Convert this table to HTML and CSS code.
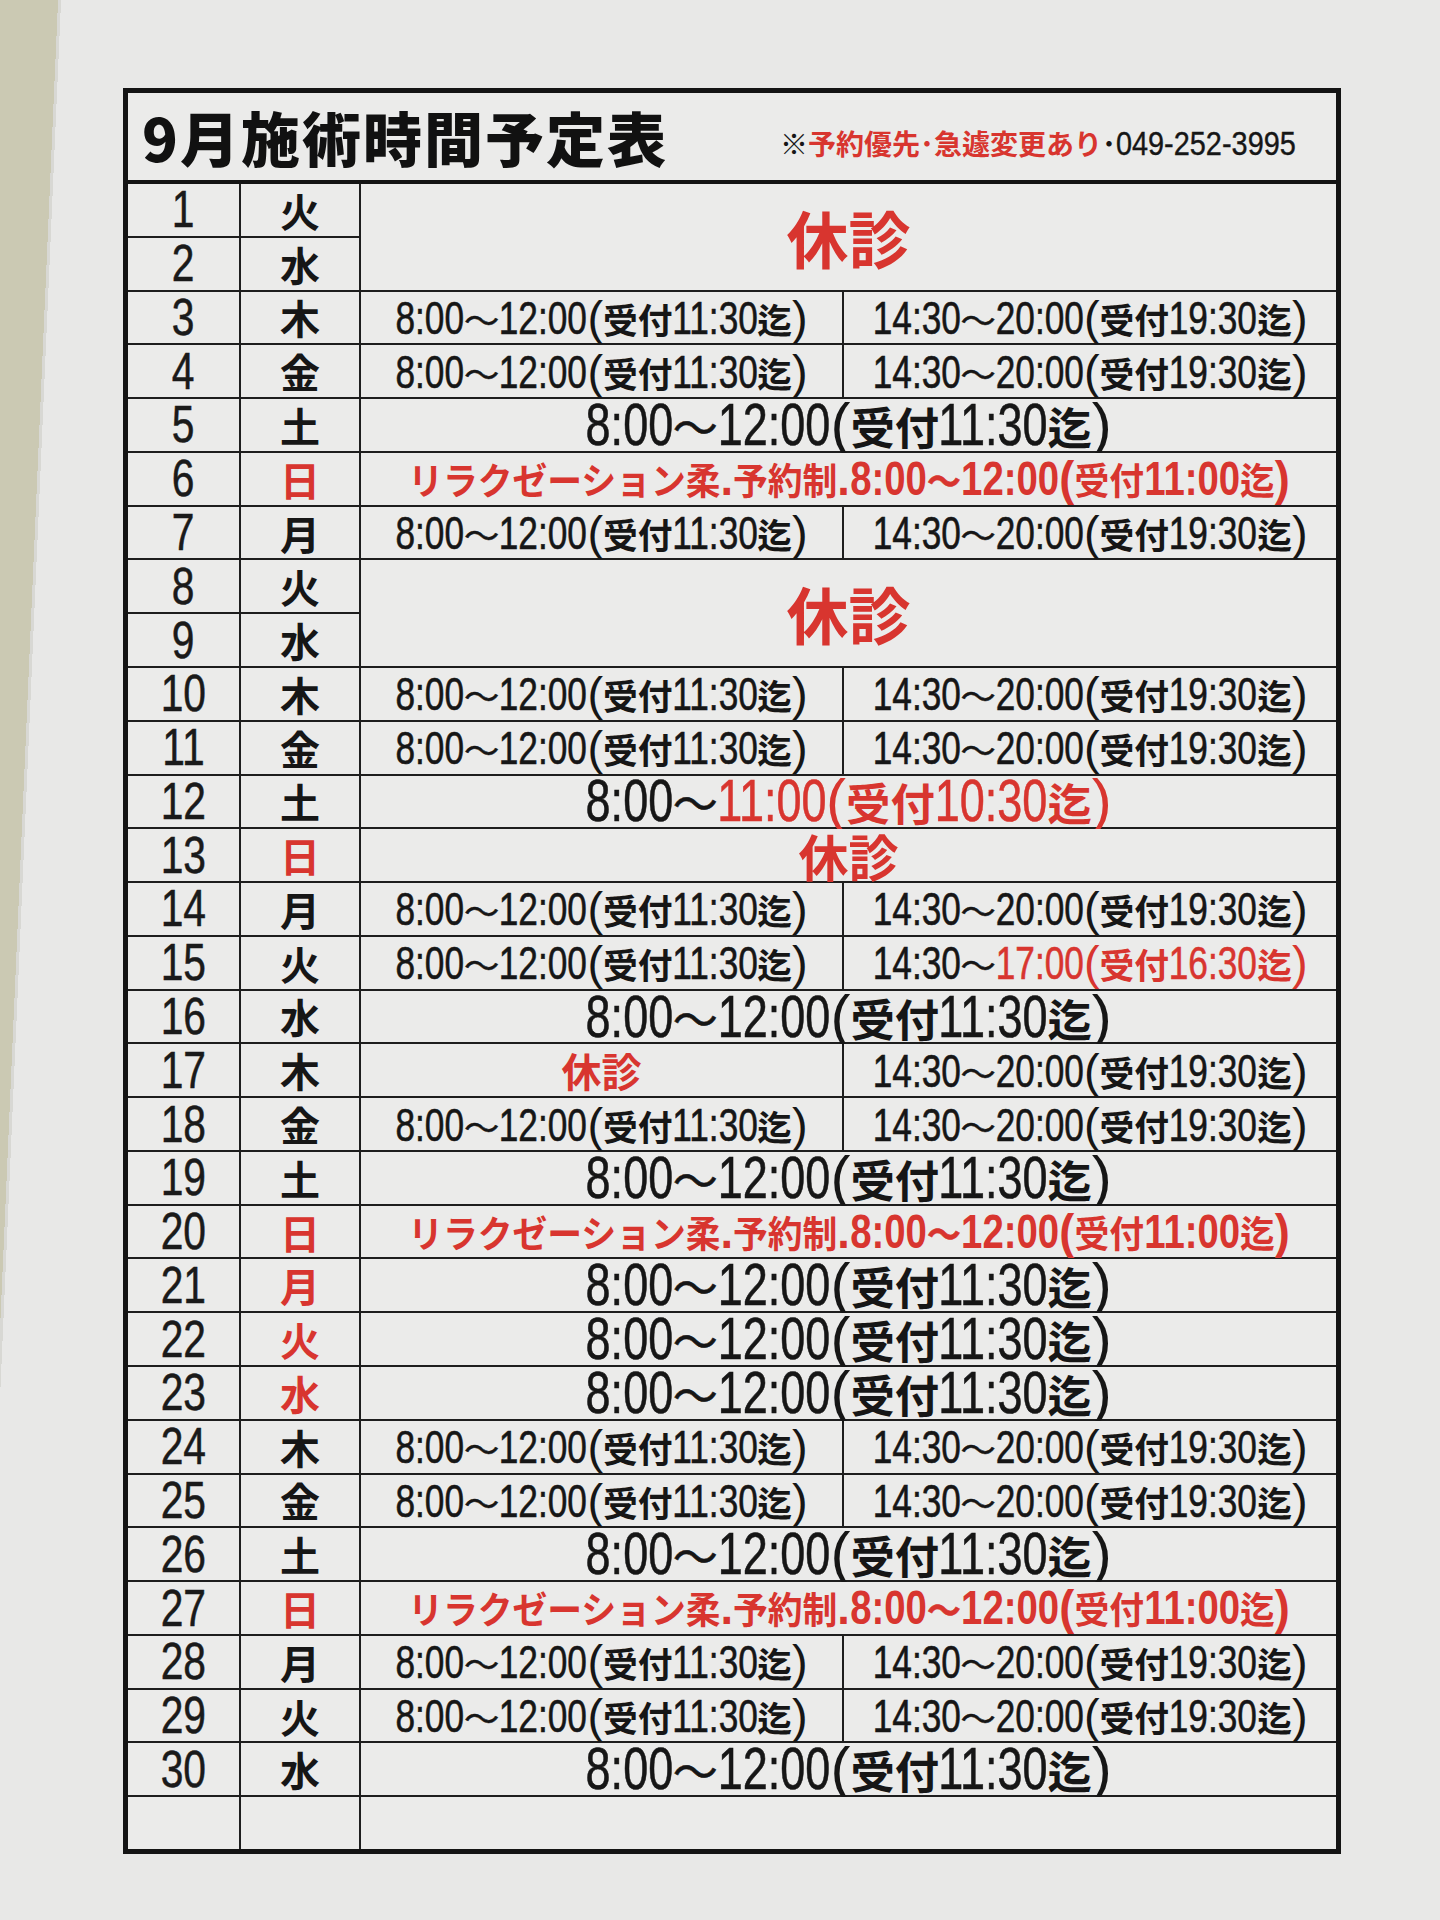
FILE: index.html
```html
<!DOCTYPE html>
<html lang="ja">
<head>
<meta charset="utf-8">
<title>9月施術時間予定表</title>
<link rel="stylesheet" href="styles.css">
</head>
<body>
<div class="sheet">
  <div class="head">
    <h1 class="title">9月施術時間予定表</h1>
    <p class="note"><span class="k">※</span><span class="red">予約優先･急遽変更あり</span><span class="k">･</span><i class="tel">049-252-3995</i></p>
  </div>
  <div class="grid">
    <div class="c num"><span>1</span></div><div class="c wd">火</div>
    <div class="c closed big span2r span2c"><span>休診</span></div>
    <div class="c num"><span>2</span></div><div class="c wd">水</div>

    <div class="c num"><span>3</span></div><div class="c wd">木</div>
    <div class="c sp"><span class="t"><i class="h4">8:00</i><span class="w">～</span><i class="h5">12:00</i>(<b>受付</b><i class="h5">11:30</i><b>迄</b>)</span></div>
    <div class="c sp"><span class="t"><i class="h5">14:30</i><span class="w">～</span><i class="h5">20:00</i>(<b>受付</b><i class="h5">19:30</i><b>迄</b>)</span></div>

    <div class="c num"><span>4</span></div><div class="c wd">金</div>
    <div class="c sp"><span class="t"><i class="h4">8:00</i><span class="w">～</span><i class="h5">12:00</i>(<b>受付</b><i class="h5">11:30</i><b>迄</b>)</span></div>
    <div class="c sp"><span class="t"><i class="h5">14:30</i><span class="w">～</span><i class="h5">20:00</i>(<b>受付</b><i class="h5">19:30</i><b>迄</b>)</span></div>

    <div class="c num"><span>5</span></div><div class="c wd">土</div>
    <div class="c full span2c"><span class="t"><i class="h4">8:00</i><span class="w">～</span><i class="h5">12:00</i>(<b>受付</b><i class="h5">11:30</i><b>迄</b>)</span></div>

    <div class="c num"><span>6</span></div><div class="c wd red">日</div>
    <div class="c relax span2c"><span class="t"><b>リラクゼーション柔</b>.<b>予約制</b>.<i class="h4">8:00</i><span class="w">～</span><i class="h5">12:00</i>(<b>受付</b><i class="h5">11:00</i><b>迄</b>)</span></div>

    <div class="c num"><span>7</span></div><div class="c wd">月</div>
    <div class="c sp"><span class="t"><i class="h4">8:00</i><span class="w">～</span><i class="h5">12:00</i>(<b>受付</b><i class="h5">11:30</i><b>迄</b>)</span></div>
    <div class="c sp"><span class="t"><i class="h5">14:30</i><span class="w">～</span><i class="h5">20:00</i>(<b>受付</b><i class="h5">19:30</i><b>迄</b>)</span></div>

    <div class="c num"><span>8</span></div><div class="c wd">火</div>
    <div class="c closed big span2r span2c"><span>休診</span></div>
    <div class="c num"><span>9</span></div><div class="c wd">水</div>

    <div class="c num"><span>10</span></div><div class="c wd">木</div>
    <div class="c sp"><span class="t"><i class="h4">8:00</i><span class="w">～</span><i class="h5">12:00</i>(<b>受付</b><i class="h5">11:30</i><b>迄</b>)</span></div>
    <div class="c sp"><span class="t"><i class="h5">14:30</i><span class="w">～</span><i class="h5">20:00</i>(<b>受付</b><i class="h5">19:30</i><b>迄</b>)</span></div>

    <div class="c num"><span>11</span></div><div class="c wd">金</div>
    <div class="c sp"><span class="t"><i class="h4">8:00</i><span class="w">～</span><i class="h5">12:00</i>(<b>受付</b><i class="h5">11:30</i><b>迄</b>)</span></div>
    <div class="c sp"><span class="t"><i class="h5">14:30</i><span class="w">～</span><i class="h5">20:00</i>(<b>受付</b><i class="h5">19:30</i><b>迄</b>)</span></div>

    <div class="c num"><span>12</span></div><div class="c wd">土</div>
    <div class="c full span2c"><span class="t"><i class="h4">8:00</i><span class="w">～</span><span class="red"><i class="h5">11:00</i>(<b>受付</b><i class="h5">10:30</i><b>迄</b>)</span></span></div>

    <div class="c num"><span>13</span></div><div class="c wd red">日</div>
    <div class="c closed mid span2c"><span>休診</span></div>

    <div class="c num"><span>14</span></div><div class="c wd">月</div>
    <div class="c sp"><span class="t"><i class="h4">8:00</i><span class="w">～</span><i class="h5">12:00</i>(<b>受付</b><i class="h5">11:30</i><b>迄</b>)</span></div>
    <div class="c sp"><span class="t"><i class="h5">14:30</i><span class="w">～</span><i class="h5">20:00</i>(<b>受付</b><i class="h5">19:30</i><b>迄</b>)</span></div>

    <div class="c num"><span>15</span></div><div class="c wd">火</div>
    <div class="c sp"><span class="t"><i class="h4">8:00</i><span class="w">～</span><i class="h5">12:00</i>(<b>受付</b><i class="h5">11:30</i><b>迄</b>)</span></div>
    <div class="c sp"><span class="t"><i class="h5">14:30</i><span class="w">～</span><span class="red"><i class="h5">17:00</i>(<b>受付</b><i class="h5">16:30</i><b>迄</b>)</span></span></div>

    <div class="c num"><span>16</span></div><div class="c wd">水</div>
    <div class="c full span2c"><span class="t"><i class="h4">8:00</i><span class="w">～</span><i class="h5">12:00</i>(<b>受付</b><i class="h5">11:30</i><b>迄</b>)</span></div>

    <div class="c num"><span>17</span></div><div class="c wd">木</div>
    <div class="c closed small"><span>休診</span></div>
    <div class="c sp"><span class="t"><i class="h5">14:30</i><span class="w">～</span><i class="h5">20:00</i>(<b>受付</b><i class="h5">19:30</i><b>迄</b>)</span></div>

    <div class="c num"><span>18</span></div><div class="c wd">金</div>
    <div class="c sp"><span class="t"><i class="h4">8:00</i><span class="w">～</span><i class="h5">12:00</i>(<b>受付</b><i class="h5">11:30</i><b>迄</b>)</span></div>
    <div class="c sp"><span class="t"><i class="h5">14:30</i><span class="w">～</span><i class="h5">20:00</i>(<b>受付</b><i class="h5">19:30</i><b>迄</b>)</span></div>

    <div class="c num"><span>19</span></div><div class="c wd">土</div>
    <div class="c full span2c"><span class="t"><i class="h4">8:00</i><span class="w">～</span><i class="h5">12:00</i>(<b>受付</b><i class="h5">11:30</i><b>迄</b>)</span></div>

    <div class="c num"><span>20</span></div><div class="c wd red">日</div>
    <div class="c relax span2c"><span class="t"><b>リラクゼーション柔</b>.<b>予約制</b>.<i class="h4">8:00</i><span class="w">～</span><i class="h5">12:00</i>(<b>受付</b><i class="h5">11:00</i><b>迄</b>)</span></div>

    <div class="c num"><span>21</span></div><div class="c wd red">月</div>
    <div class="c full span2c"><span class="t"><i class="h4">8:00</i><span class="w">～</span><i class="h5">12:00</i>(<b>受付</b><i class="h5">11:30</i><b>迄</b>)</span></div>

    <div class="c num"><span>22</span></div><div class="c wd red">火</div>
    <div class="c full span2c"><span class="t"><i class="h4">8:00</i><span class="w">～</span><i class="h5">12:00</i>(<b>受付</b><i class="h5">11:30</i><b>迄</b>)</span></div>

    <div class="c num"><span>23</span></div><div class="c wd red">水</div>
    <div class="c full span2c"><span class="t"><i class="h4">8:00</i><span class="w">～</span><i class="h5">12:00</i>(<b>受付</b><i class="h5">11:30</i><b>迄</b>)</span></div>

    <div class="c num"><span>24</span></div><div class="c wd">木</div>
    <div class="c sp"><span class="t"><i class="h4">8:00</i><span class="w">～</span><i class="h5">12:00</i>(<b>受付</b><i class="h5">11:30</i><b>迄</b>)</span></div>
    <div class="c sp"><span class="t"><i class="h5">14:30</i><span class="w">～</span><i class="h5">20:00</i>(<b>受付</b><i class="h5">19:30</i><b>迄</b>)</span></div>

    <div class="c num"><span>25</span></div><div class="c wd">金</div>
    <div class="c sp"><span class="t"><i class="h4">8:00</i><span class="w">～</span><i class="h5">12:00</i>(<b>受付</b><i class="h5">11:30</i><b>迄</b>)</span></div>
    <div class="c sp"><span class="t"><i class="h5">14:30</i><span class="w">～</span><i class="h5">20:00</i>(<b>受付</b><i class="h5">19:30</i><b>迄</b>)</span></div>

    <div class="c num"><span>26</span></div><div class="c wd">土</div>
    <div class="c full span2c"><span class="t"><i class="h4">8:00</i><span class="w">～</span><i class="h5">12:00</i>(<b>受付</b><i class="h5">11:30</i><b>迄</b>)</span></div>

    <div class="c num"><span>27</span></div><div class="c wd red">日</div>
    <div class="c relax span2c"><span class="t"><b>リラクゼーション柔</b>.<b>予約制</b>.<i class="h4">8:00</i><span class="w">～</span><i class="h5">12:00</i>(<b>受付</b><i class="h5">11:00</i><b>迄</b>)</span></div>

    <div class="c num"><span>28</span></div><div class="c wd">月</div>
    <div class="c sp"><span class="t"><i class="h4">8:00</i><span class="w">～</span><i class="h5">12:00</i>(<b>受付</b><i class="h5">11:30</i><b>迄</b>)</span></div>
    <div class="c sp"><span class="t"><i class="h5">14:30</i><span class="w">～</span><i class="h5">20:00</i>(<b>受付</b><i class="h5">19:30</i><b>迄</b>)</span></div>

    <div class="c num"><span>29</span></div><div class="c wd">火</div>
    <div class="c sp"><span class="t"><i class="h4">8:00</i><span class="w">～</span><i class="h5">12:00</i>(<b>受付</b><i class="h5">11:30</i><b>迄</b>)</span></div>
    <div class="c sp"><span class="t"><i class="h5">14:30</i><span class="w">～</span><i class="h5">20:00</i>(<b>受付</b><i class="h5">19:30</i><b>迄</b>)</span></div>

    <div class="c num"><span>30</span></div><div class="c wd">水</div>
    <div class="c full span2c"><span class="t"><i class="h4">8:00</i><span class="w">～</span><i class="h5">12:00</i>(<b>受付</b><i class="h5">11:30</i><b>迄</b>)</span></div>

    <div class="c num"></div><div class="c wd"></div>
    <div class="c span2c"></div>
  </div>
</div>
</body>
</html>
```

FILE: styles.css
```css
html {
  width: 1440px;
  height: 1920px;
  background: linear-gradient(92.5deg, #cbc9b3 0 58px, #d8d8d4 58px 61px, #e8e8e7 61px);
}

body {
  margin: 0;
  color: #161616;
  font-family: "Noto Sans CJK JP", sans-serif;
}

.sheet {
  width: 1218px;
  margin: 88px 0 0 123px;
  border: 5px solid #141414;
  background: #ebebea;
  box-sizing: border-box;
}

.head {
  height: 87px;
  border-bottom: 4px solid #141414;
  display: flex;
  align-items: center;
  justify-content: space-between;
  padding: 0 40px 0 14px;
}

.title {
  margin: 0;
  font-family: "Noto Sans CJK JP", sans-serif;
  font-weight: 900;
  font-size: 59px;
  line-height: 1;
  letter-spacing: 2px;
  color: #111;
}

.note {
  margin: 12px 0 0;
  font-size: 28px;
  line-height: 1;
  font-weight: 700;
  white-space: nowrap;
}

.note .k {
  color: #161616;
}

.note .tel {
  display: inline-block;
  font-style: normal;
  font-family: "Liberation Sans", sans-serif;
  font-weight: 400;
  font-size: 34px;
  color: #161616;
  transform: scaleX(0.85);
  margin: 0 -0.467em;
  -webkit-text-stroke: 0.4px currentColor;
}

.red {
  color: #d8352f;
}

.grid {
  display: grid;
  grid-template-columns: 111px 118px 481px minmax(0, 1fr);
  grid-template-rows: repeat(31, minmax(0, 1fr));
  gap: 2px;
  height: 1665px;
  background: #1e1e1e;
}

.c {
  background: #ebebea;
  display: flex;
  align-items: center;
  justify-content: center;
  min-width: 0;
  min-height: 0;
  white-space: nowrap;
}

.span2c {
  grid-column: span 2;
}

.span2r {
  grid-row: span 2;
}

.num {
  font-family: "Liberation Sans", sans-serif;
  font-size: 51px;
  line-height: 1;
  color: #1a1a1a;
}

.num span {
  display: inline-block;
  transform: scaleX(0.8);
  -webkit-text-stroke: 0.5px currentColor;
}

.wd {
  font-family: "Noto Sans CJK JP", sans-serif;
  font-weight: 700;
  font-size: 40px;
  line-height: 1;
  color: #161616;
}

.wd.red {
  color: #d8352f;
}

.t {
  font-family: "Liberation Sans", sans-serif;
  font-weight: 400;
  line-height: 1;
}

.t i {
  display: inline-block;
  font-style: normal;
  transform: scaleX(0.75);
  -webkit-text-stroke: 0.6px currentColor;
}

.t i.h4 {
  margin: 0 -0.243em;
}

.t i.h5 {
  margin: 0 -0.313em;
}

.t b {
  font-family: "Noto Sans CJK JP", sans-serif;
  font-weight: 700;
  font-size: 0.74em;
}

.t .w {
  font-family: "Noto Sans CJK JP", sans-serif;
  font-size: 0.75em;
  -webkit-text-stroke: 0.5px currentColor;
}

.sp .t {
  font-size: 47px;
}

.full .t {
  font-size: 60px;
}

.relax .t {
  display: inline-block;
  font-size: 48px;
  font-weight: 700;
  color: #d8352f;
  transform: scaleX(0.94);
}

.relax .t i {
  transform: scaleX(0.85);
  -webkit-text-stroke: 0;
}

.relax .t b {
  font-size: 37px;
}

.relax .t i.h4 {
  margin: 0 -0.146em;
}

.relax .t i.h5 {
  margin: 0 -0.188em;
}

.closed span {
  font-family: "Noto Sans CJK JP", sans-serif;
  font-weight: 700;
  color: #d8352f;
  line-height: 1;
}

.closed.big span {
  font-size: 62px;
}

.closed.mid span {
  font-size: 50px;
}

.closed.small span {
  font-size: 40px;
}
```
